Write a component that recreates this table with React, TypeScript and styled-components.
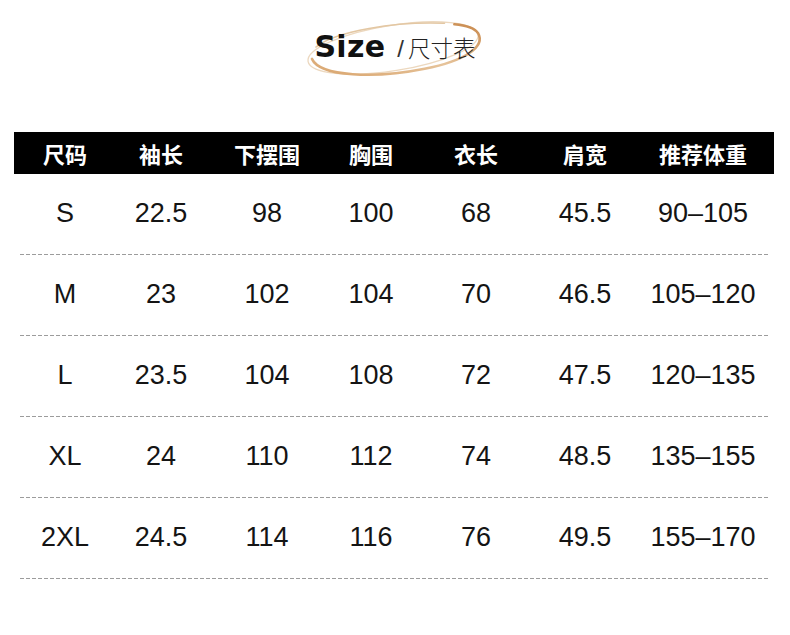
import React from "react";
import styled, { createGlobalStyle } from "styled-components";

const Global = createGlobalStyle`
  html, body { margin: 0; padding: 0; background: #ffffff; }
  body { font-family: "Liberation Sans", "Noto Sans CJK SC", Arial, sans-serif; }
`;

const Page = styled.div`
  width: 790px;
  height: 635px;
  background: #fff;
  overflow: hidden;
`;

const TitleArea = styled.div`
  height: 132px;
  display: flex;
  justify-content: center;
  align-items: flex-start;
  padding-top: 27px;
  box-sizing: border-box;
`;

const TitleBox = styled.div`
  position: relative;
  display: flex;
  align-items: baseline;
  line-height: 40px;
  height: 40px;
`;

const SizeWord = styled.span`
  position: relative;
  z-index: 1;
  font-family: "DejaVu Sans", "Liberation Sans", sans-serif;
  font-weight: 700;
  font-size: 30px;
  letter-spacing: 0.3px;
  color: #111;
`;

const Slash = styled.span`
  position: relative;
  z-index: 1;
  font-family: "Liberation Sans", Arial, sans-serif;
  font-weight: 400;
  font-size: 24px;
  color: #333;
  margin: 0 4px 0 12px;
`;

const CnTitle = styled.span`
  position: relative;
  z-index: 1;
  font-family: "Noto Sans CJK SC", sans-serif;
  font-weight: 300;
  font-size: 22.5px;
  color: #222;
`;

const Ring = styled.svg`
  position: absolute;
  left: -8px;
  top: -10px;
  width: 178px;
  height: 64px;
  z-index: 0;
  overflow: visible;
`;

const Table = styled.div`
  margin: 0 16px 0 14px;
  width: 760px;
`;

const cols = "102px 90px 122px 86px 124px 94px 142px";

const HeaderRow = styled.div`
  display: grid;
  grid-template-columns: ${cols};
  height: 42px;
  background: #000;
  align-items: center;
`;

const HeadCell = styled.div`
  text-align: center;
  color: #fff;
  font-family: "Noto Sans CJK SC", sans-serif;
  font-weight: 700;
  font-size: 22px;
  line-height: 42px;
`;

const Row = styled.div`
  display: grid;
  grid-template-columns: ${cols};
  height: 80px;
  align-items: center;
`;

const Cell = styled.div`
  text-align: center;
  font-family: "Liberation Sans", Arial, sans-serif;
  font-size: 27px;
  color: #141414;
  padding-bottom: 2px;
`;

const Divider = styled.div`
  height: 1px;
  margin: 0 4px 0 6px;
  background: repeating-linear-gradient(to right, #9c9c9c 0 4px, transparent 4px 6px);
`;

const headers = ["尺码", "袖长", "下摆围", "胸围", "衣长", "肩宽", "推荐体重"];
const rows = [
  ["S", "22.5", "98", "100", "68", "45.5", "90–105"],
  ["M", "23", "102", "104", "70", "46.5", "105–120"],
  ["L", "23.5", "104", "108", "72", "47.5", "120–135"],
  ["XL", "24", "110", "112", "74", "48.5", "135–155"],
  ["2XL", "24.5", "114", "116", "76", "49.5", "155–170"],
];

export default function App() {
  return (
    <Page>
      <Global />
      <TitleArea>
        <TitleBox>
          <Ring viewBox="0 0 180 64">
            <defs>
              <linearGradient id="rg" x1="0" y1="1" x2="1" y2="0">
                <stop offset="0" stopColor="#d9a56e" />
                <stop offset="0.5" stopColor="#e6c39a" />
                <stop offset="1" stopColor="#c98a4e" />
              </linearGradient>
            </defs>
            <ellipse
              cx="88"
              cy="31"
              rx="87"
              ry="23"
              transform="rotate(-9 88 31)"
              fill="none"
              stroke="#ecd8bf"
              strokeWidth="1.3"
            />
            <path
              d="M 6 42 C 14 60, 70 62, 120 52 C 160 44, 182 30, 174 16 C 170 10, 160 8, 150 7"
              fill="none"
              stroke="url(#rg)"
              strokeWidth="2.6"
              strokeLinecap="round"
            />
            <path
              d="M 10 30 C 30 14, 90 4, 140 6"
              fill="none"
              stroke="#e3c7a3"
              strokeWidth="1.6"
              strokeLinecap="round"
            />
          </Ring>
          <SizeWord>Size</SizeWord>
          <Slash>/</Slash>
          <CnTitle>尺寸表</CnTitle>
        </TitleBox>
      </TitleArea>
      <Table>
        <HeaderRow>
          {headers.map((h) => (
            <HeadCell key={h}>{h}</HeadCell>
          ))}
        </HeaderRow>
        {rows.map((r) => (
          <React.Fragment key={r[0]}>
            <Row>
              {r.map((c, i) => (
                <Cell key={i}>{c}</Cell>
              ))}
            </Row>
            <Divider />
          </React.Fragment>
        ))}
      </Table>
    </Page>
  );
}
